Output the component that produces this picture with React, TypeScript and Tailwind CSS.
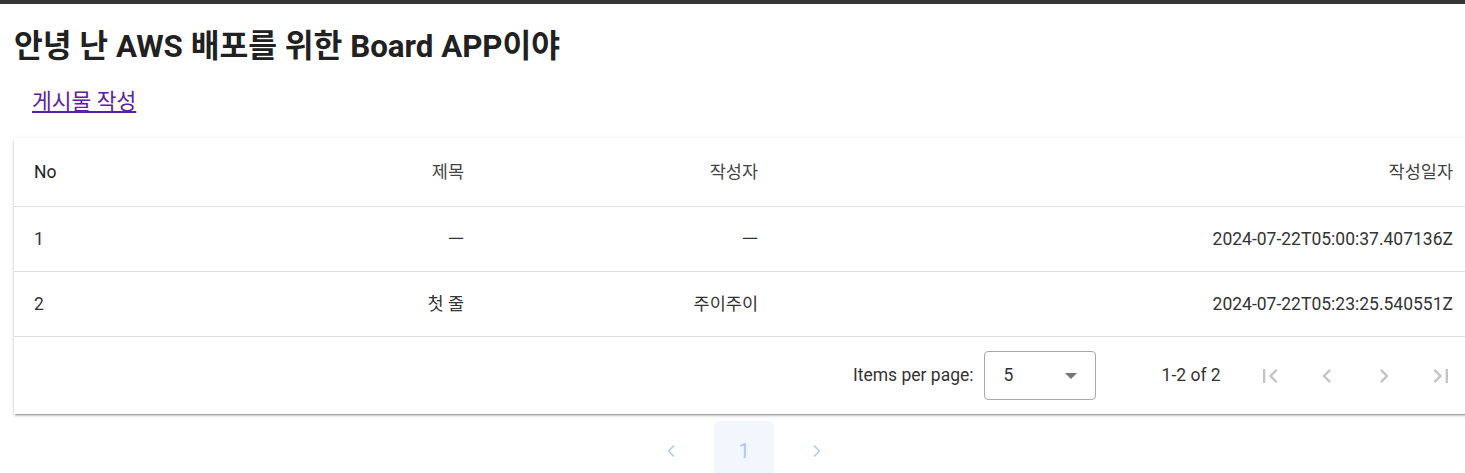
import { ChevronLeft, ChevronRight } from "lucide-react";

const rows = [
  { no: 1, title: "ㅡ", author: "ㅡ", date: "2024-07-22T05:00:37.407136Z" },
  { no: 2, title: "첫 줄", author: "주이주이", date: "2024-07-22T05:23:25.540551Z" },
];

function MatIcon({ d }: { d: string }) {
  return (
    <svg viewBox="0 0 24 24" className="w-[28px] h-[28px] fill-[#c4c4c4]">
      <path d={d} />
    </svg>
  );
}

export default function App() {
  return (
    <div className="h-screen overflow-hidden bg-white font-[Roboto,'Noto_Sans_CJK_KR',sans-serif] text-[#212121]">
      <div className="h-[4px] bg-[#363636]" />

      <h1 className="mt-[25px] px-[14px] text-[31.3px] leading-[36px] font-bold text-[#212121]">
        안녕 난 AWS 배포를 위한 Board APP이야
      </h1>

      <div className="mt-[25px] pl-[32px]">
        <a href="#" className="text-[21.5px] leading-[24px] text-[#5b21a0] underline">
          게시물 작성
        </a>
      </div>

      {/* table card */}
      <div className="mt-[22px] ml-[14px] w-[1463px] bg-white shadow-[0_3px_1px_-2px_rgba(0,0,0,0.2),0_2px_2px_0_rgba(0,0,0,0.14),0_1px_5px_0_rgba(0,0,0,0.12)] text-[17.5px]">
        <div className="grid grid-cols-[200px_230px_294px_695px] h-[69px] items-center pl-[20px] border-b border-[#e0e0e0]">
          <div className="text-[#222]">No</div>
          <div className="text-right text-[#444]">제목</div>
          <div className="text-right text-[#444]">작성자</div>
          <div className="text-right text-[#444]">작성일자</div>
        </div>
        {rows.map((r) => (
          <div
            key={r.no}
            className="grid grid-cols-[200px_230px_294px_695px] h-[65px] items-center pl-[20px] border-b border-[#e0e0e0] text-[#333]"
          >
            <div>{r.no}</div>
            <div className="text-right">{r.title}</div>
            <div className="text-right">{r.author}</div>
            <div className="text-right">{r.date}</div>
          </div>
        ))}

        {/* paginator */}
        <div className="flex items-center h-[77px] pl-[839px] text-[17.5px] text-[#333]">
          <span>Items per page:</span>
          <div className="ml-[10px] flex items-center justify-between w-[112px] h-[49px] border border-[#a8a8a8] rounded-[4px] pl-[19px] pr-[18px]">
            <span>5</span>
            <span className="w-0 h-0 border-l-[6px] border-r-[6px] border-t-[6px] border-l-transparent border-r-transparent border-t-[#757575]" />
          </div>
          <span className="ml-[66px]">1-2 of 2</span>
          <div className="ml-[35px] flex items-center gap-[29px]">
            <MatIcon d="M18.41 16.59L13.82 12l4.59-4.59L17 6l-6 6 6 6zM6 6h2v12H6z" />
            <MatIcon d="M15.41 7.41L14 6l-6 6 6 6 1.41-1.41L10.83 12z" />
            <MatIcon d="M10 6L8.59 7.41 13.17 12l-4.58 4.59L10 18l6-6z" />
            <MatIcon d="M5.59 7.41L10.18 12l-4.59 4.59L7 18l6-6-6-6zM16 6h2v12h-2z" />
          </div>
        </div>
      </div>

      {/* bottom pager */}
      <div className="mt-[7px] ml-[641px] flex gap-[13px]">
        <button className="w-[60px] h-[60px] flex items-center justify-center text-[#aecbee]">
          <ChevronLeft className="w-[20px] h-[20px]" strokeWidth={2} />
        </button>
        <button className="w-[60px] h-[60px] rounded-[6px] bg-[#f3f7fd] text-[20px] text-[#a9c8ed]">1</button>
        <button className="w-[60px] h-[60px] flex items-center justify-center text-[#aecbee]">
          <ChevronRight className="w-[20px] h-[20px]" strokeWidth={2} />
        </button>
      </div>
    </div>
  );
}
